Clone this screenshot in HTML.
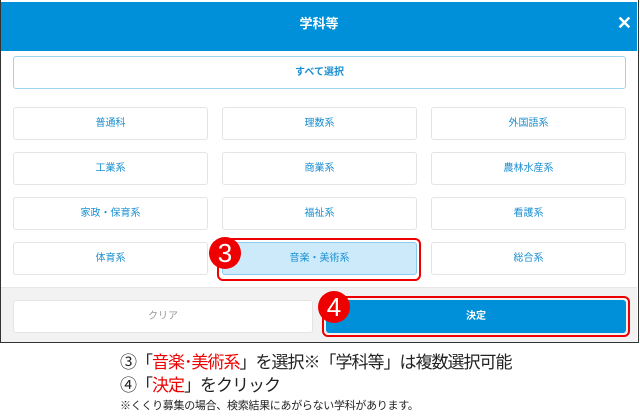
<!DOCTYPE html>
<html><head><meta charset="utf-8"><style>
*{margin:0;padding:0;box-sizing:border-box}
body{width:640px;height:418px;background:#fff;position:relative;font-family:"Liberation Sans","Noto Sans CJK JP",sans-serif;overflow:hidden}
.abs{position:absolute}
.modal{left:0;top:0;width:639px;height:343px;border:1px solid #333;border-top:none;background:#fff}
.hdr{left:1px;top:2px;width:636px;height:49px;background:#0090d9;color:#fff;font-weight:bold;font-size:13px;text-align:center;line-height:44px}
.x{right:8px;top:13px;color:#fff;font-size:18px;font-weight:bold}
.b{position:absolute;height:33px;border:1px solid #e4e4e4;border-radius:3px;background:#fff;color:#1a8fd0;font-size:10px;text-align:center;line-height:31px}
.foot{left:1px;top:287px;width:636px;height:55px;background:#f2f2f2;border-top:1px solid #e6e6e6}
.red{position:absolute;border:2px solid #e00;border-radius:6px}
.badge{position:absolute;width:32px;height:32px;border-radius:50%;background:#e00;color:#fff;font-size:26px;text-align:center;line-height:32px}
.t{position:absolute;color:#222;letter-spacing:-1px}
.r{color:#e00}
</style></head><body>
<div class="abs modal"></div>
<div class="abs hdr">学科等</div>
<div class="abs x">✕</div>
<div class="b" style="left:13px;top:56px;width:613px;border-color:#9fd3f0;font-weight:bold">すべて選択</div>
<div class="b" style="left:13px;top:107px;width:195px">普通科</div>
<div class="b" style="left:222px;top:107px;width:195px">理数系</div>
<div class="b" style="left:431px;top:107px;width:195px">外国語系</div>
<div class="b" style="left:13px;top:152px;width:195px">工業系</div>
<div class="b" style="left:222px;top:152px;width:195px">商業系</div>
<div class="b" style="left:431px;top:152px;width:195px">農林水産系</div>
<div class="b" style="left:13px;top:197px;width:195px">家政・保育系</div>
<div class="b" style="left:222px;top:197px;width:195px">福祉系</div>
<div class="b" style="left:431px;top:197px;width:195px">看護系</div>
<div class="b" style="left:13px;top:242px;width:195px">体育系</div>
<div class="b" style="left:222px;top:242px;width:195px;background:#cdeafb;border-color:#8ccbef">音楽・美術系</div>
<div class="b" style="left:431px;top:242px;width:195px">総合系</div>
<div class="red" style="left:217px;top:238px;width:204px;height:43px"></div>
<div class="badge" style="left:209px;top:237px">3</div>
<div class="abs foot"></div>
<div class="b" style="left:13px;top:300px;width:300px;color:#999">クリア</div>
<div class="b" style="left:326px;top:300px;width:300px;background:#0090d9;border-color:#0090d9;color:#fff;font-weight:bold">決定</div>
<div class="red" style="left:322px;top:296px;width:308px;height:41px"></div>
<div class="badge" style="left:318px;top:291px">4</div>
<div class="t" style="left:120px;top:352px;font-size:17px;line-height:22px">③「<span class="r">音楽･美術系</span>」を選択※「学科等」は複数選択可能</div>
<div class="t" style="left:120px;top:375px;font-size:17px;line-height:22px">④「<span class="r">決定</span>」をクリック</div>
<div class="t" style="left:120px;top:399px;font-size:11px;line-height:14px;letter-spacing:-0.3px">※くくり募集の場合、検索結果にあがらない学科があります。</div>
</body></html>
